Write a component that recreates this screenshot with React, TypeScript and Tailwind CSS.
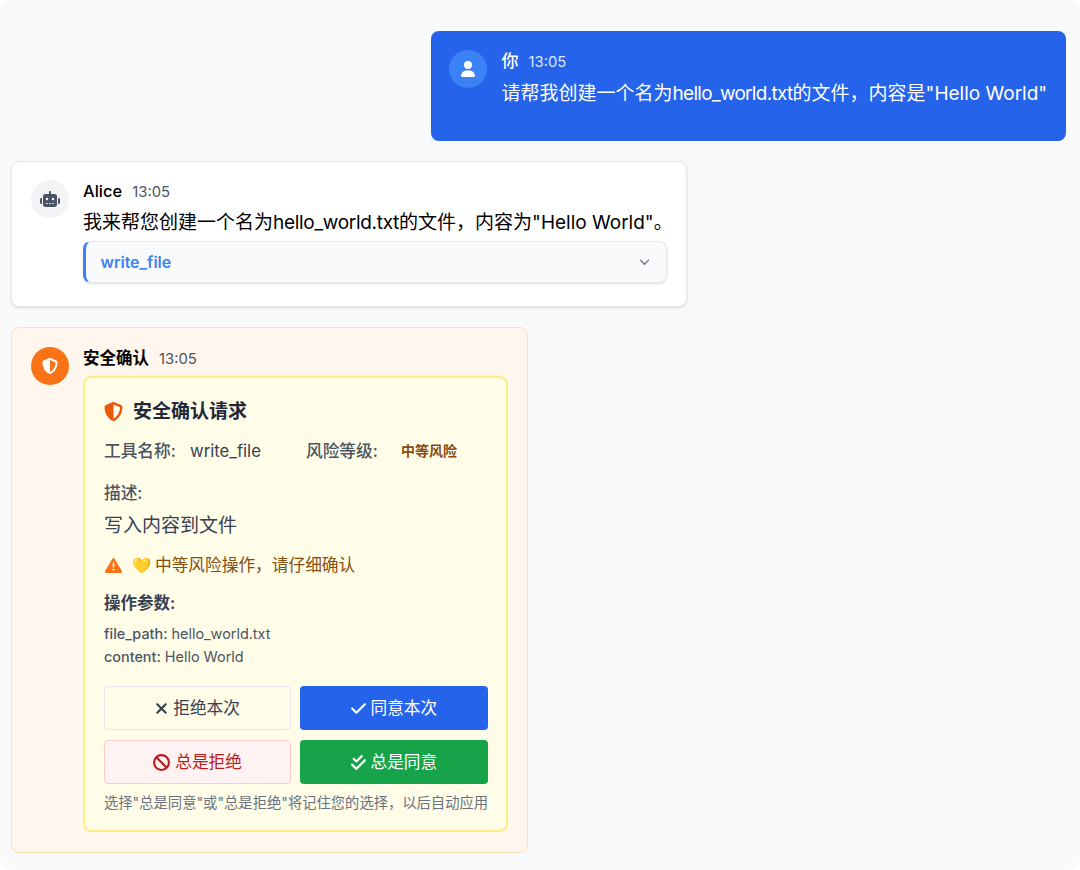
import { FaUser, FaRobot, FaXmark, FaCheck, FaBan, FaCheckDouble, FaChevronDown, FaShieldHalved, FaTriangleExclamation } from "react-icons/fa6";

export default function App() {
  return (
    <div className="min-h-[870px] rounded-xl bg-[#f9fafb] pt-[31px] pl-[11px] pr-[14px] flex flex-col gap-5 font-['Inter','Noto_Sans_CJK_SC',sans-serif]">
      {/* user message */}
      <div className="self-end w-[635.5px] h-[109.7px] bg-[#2563eb] rounded-lg py-[19px] pl-[18.5px] flex gap-[14.5px] text-white">
        <div className="w-[38px] h-[38px] shrink-0 rounded-full bg-[#3b82f6] flex items-center justify-center">
          <FaUser className="w-[14px] h-[16px]" />
        </div>
        <div>
          <div className="flex items-center gap-[10px] h-6">
            <span className="text-[17px] font-medium">你</span>
            <span className="text-[14.8px] text-[#dbeafe]">13:05</span>
          </div>
          <p className="mt-[6px] text-[19px] leading-[28px] whitespace-nowrap">
            请帮我创建一个名为<span className="tracking-[-0.7px]">hello_world.txt</span>的文件，内容是"Hello World"
          </p>
        </div>
      </div>

      {/* assistant message */}
      <div className="w-[675.5px] h-[146.5px] bg-white border border-[#e5e7eb] rounded-lg px-[19px] pt-[18px] flex gap-[14px] shadow-sm">
        <div className="w-[38px] h-[38px] shrink-0 rounded-full bg-[#f3f4f6] flex items-center justify-center text-[#4b5563]">
          <FaRobot className="w-5 h-4" />
        </div>
        <div className="flex-1 min-w-0">
          <div className="flex items-center gap-[10px] h-6">
            <span className="text-[16.5px] font-medium text-black">Alice</span>
            <span className="text-[14.8px] text-[#4b5563]">13:05</span>
          </div>
          <p className="mt-[5px] text-[19px] leading-[28px] text-black whitespace-nowrap">
            我来帮您创建一个名为<span className="tracking-[-0.3px]">hello_world.txt</span>的文件，内容为"Hello World"。
          </p>
          <div className="mt-[4px] h-[42px] bg-[#f9fafb] border border-[#e5e7eb] border-l-[3px] border-l-[#3b82f6] rounded-lg shadow-sm flex items-center justify-between pl-[14.5px] pr-[16px]">
            <span className="text-[16px] font-semibold text-[#3b82f6]">write_file</span>
            <FaChevronDown className="w-[11px] h-[11px] text-[#6b7280]" />
          </div>
        </div>
      </div>

      {/* confirmation message */}
      <div className="w-[517px] h-[525.4px] bg-[#fff7ed] border border-[#fedfba] rounded-lg p-[19px] flex gap-[14px]">
        <div className="w-[38px] h-[38px] shrink-0 rounded-full bg-[#f97316] flex items-center justify-center text-white">
          <FaShieldHalved className="w-4 h-4" />
        </div>
        <div className="flex-1 min-w-0">
          <div className="flex items-center gap-[10px] h-[23px]">
            <span className="text-[16.5px] font-semibold text-black">安全确认</span>
            <span className="text-[14.8px] text-[#4b5563]">13:05</span>
          </div>
          <div className="mt-[6.2px] h-[456px] bg-[#fffce8] border-2 border-[#ffec85] rounded-lg pl-[19px] pr-[18.5px] pt-[19.5px]">
            <div className="flex items-center gap-[10px] h-[28px]">
              <FaShieldHalved className="w-[19px] h-[19px] text-[#ea580c]" />
              <span className="text-[19px] font-semibold text-[#1f2937]">安全确认请求</span>
            </div>
            <div className="mt-[13.5px] flex items-center h-6 text-[16.7px] text-[#374151]">
              <span className="w-[86px] font-medium text-[#4b5563]">工具名称:</span>
              <span className="w-[116px]">write_file</span>
              <span className="w-[95px] font-medium text-[#4b5563]">风险等级:</span>
              <span className="text-sm font-semibold text-[#854d0e]">中等风险</span>
            </div>
            <div className="mt-[18.3px] h-6 flex items-center text-[16.7px] font-medium text-[#4b5563]">描述:</div>
            <p className="mt-[6px] text-[19px] leading-7 text-[#374151]">写入内容到文件</p>
            <div className="mt-[14px] h-6 flex items-center text-[16.7px] text-[#854d0e]">
              <FaTriangleExclamation className="w-[19px] h-[17px] text-[#f97316] mr-[9px]" />
              <span className="text-[15.5px] mr-[4px]">💛</span>
              <span>中等风险操作，请仔细确认</span>
            </div>
            <div className="mt-[14px] h-6 flex items-center text-[16.5px] font-semibold text-[#374151]">操作参数:</div>
            <div className="mt-[6px] text-[14.4px] leading-[23.7px] text-[#4b5563]">
              <div><span className="font-medium">file_path:</span> hello_world.txt</div>
              <div><span className="font-medium">content:</span> Hello World</div>
            </div>
            <div className="mt-[17px] grid grid-cols-2 gap-x-[9px] gap-y-[10px]">
              <button className="h-[43.5px] pt-[1px] rounded border border-[#e5e7eb] text-[16.7px] text-[#374151] flex items-center justify-center gap-[5px]">
                <FaXmark className="w-[13px] h-[17px]" />拒绝本次
              </button>
              <button className="h-[43.5px] pt-[1px] rounded bg-[#2563eb] text-[16.7px] text-white flex items-center justify-center gap-[5px]">
                <FaCheck className="w-[15px] h-[17px]" />同意本次
              </button>
              <button className="h-[44px] pt-[1px] rounded border border-[#fecaca] bg-[#fef2f2] text-[16.7px] text-[#b91c1c] flex items-center justify-center gap-[5px]">
                <FaBan className="w-[17px] h-[17px]" />总是拒绝
              </button>
              <button className="h-[44px] pt-[1px] rounded bg-[#16a34a] text-[16.7px] text-white flex items-center justify-center gap-[5px]">
                <FaCheckDouble className="w-[15px] h-[17px]" />总是同意
              </button>
            </div>
            <p className="mt-[9.5px] text-[14.3px] leading-[20px] text-[#6b7280] whitespace-nowrap">选择"总是同意"或"总是拒绝"将记住您的选择，以后自动应用</p>
          </div>
        </div>
      </div>
    </div>
  );
}
